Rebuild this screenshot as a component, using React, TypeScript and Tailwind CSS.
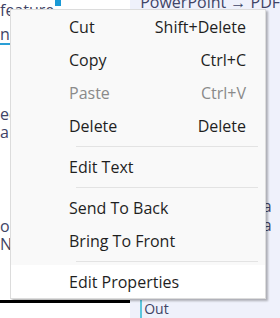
const ITEMS: ({ label: string; shortcut?: string; disabled?: boolean; active?: boolean } | "sep")[] = [
  { label: "Cut", shortcut: "Shift+Delete" },
  { label: "Copy", shortcut: "Ctrl+C" },
  { label: "Paste", shortcut: "Ctrl+V", disabled: true },
  { label: "Delete", shortcut: "Delete" },
  "sep",
  { label: "Edit Text" },
  "sep",
  { label: "Send To Back" },
  { label: "Bring To Front" },
  "sep",
  { label: "Edit Properties", active: true },
];

function ContextMenu() {
  return (
    <div className="absolute left-[10px] top-[9px] w-[256px] border border-[#dcdcdc] bg-[#f9f9f9] shadow-[2px_2px_2px_rgba(0,0,0,0.28)]">
      {ITEMS.map((item, i) =>
        item === "sep" ? (
          <div key={i} className="flex h-[8px] items-center pl-[65px] pr-[7px]">
            <div className="h-px w-full bg-[#e3e3e3]" />
          </div>
        ) : (
          <div
            key={i}
            className={`flex h-[33px] items-center justify-between pl-[58px] pr-[19px] text-[16px] ${
              item.active ? "bg-white" : ""
            } ${item.disabled ? "text-[#8a8a8a]" : "text-[#1f1f1f]"}`}
          >
            <span>{item.label}</span>
            {item.shortcut && <span>{item.shortcut}</span>}
          </div>
        )
      )}
    </div>
  );
}

export default function App() {
  return (
    <div className="relative h-[318px] w-[280px] overflow-hidden font-['Open_Sans',sans-serif]">
      <div className="flex h-full">
        <div className="relative flex w-[150px] flex-col bg-white text-[16px] text-[#3f4466]">
          <div className="flex h-[16px] items-end">
            <span className="-mb-[2px] leading-none">feature</span>
            <span className="mb-[10px] ml-[1px] h-[6px] w-[6px] bg-[#1a9ad6]" />
          </div>
          <div className="mt-[10px] w-[10px] border-b-2 border-[#2a9fd6] pb-[1px] leading-[16px]">n</div>
          <div className="mt-[60px] leading-[18px]">ed</div>
          <div className="leading-[18px]">ary</div>
          <div className="mt-[76px] leading-[18px]">or</div>
          <div className="leading-[18px]">Nit</div>
          <div className="mt-auto mb-[15px] h-[3px] w-full bg-black" />
        </div>
        <div className="relative flex flex-1 flex-col bg-[#eff1fb] text-[16px] text-[#3f4466]">
          <div className="-mt-[7px] ml-[10px] whitespace-nowrap leading-[18px]">PowerPoint → PDF</div>
          <div className="mt-[186px] ml-[118px] leading-[19px]">ata</div>
          <div className="ml-[118px] leading-[19px]">ata</div>
          <div className="ml-[118px] leading-[19px]">oc</div>
          <div className="ml-[118px] leading-[19px]">co</div>
          <div className="mt-auto ml-[10px] h-[18px] border-l-2 border-[#5bc6dd] pl-[2px] text-[14px] leading-[18px]">Out</div>
        </div>
      </div>
      <ContextMenu />
    </div>
  );
}
